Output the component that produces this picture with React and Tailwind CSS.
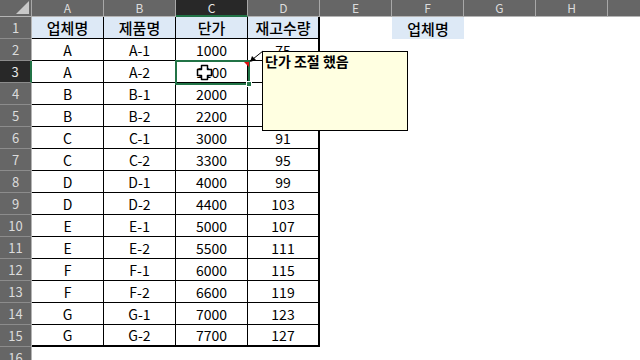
import React from 'react'

const cols = ['A', 'B', 'C', 'D', 'E', 'F', 'G', 'H', '']

const rows = [
  ['A', 'A-1', '1000', '75'],
  ['A', 'A-2', '1100', '79'],
  ['B', 'B-1', '2000', '83'],
  ['B', 'B-2', '2200', '87'],
  ['C', 'C-1', '3000', '91'],
  ['C', 'C-2', '3300', '95'],
  ['D', 'D-1', '4000', '99'],
  ['D', 'D-2', '4400', '103'],
  ['E', 'E-1', '5000', '107'],
  ['E', 'E-2', '5500', '111'],
  ['F', 'F-1', '6000', '115'],
  ['F', 'F-2', '6600', '119'],
  ['G', 'G-1', '7000', '123'],
  ['G', 'G-2', '7700', '127'],
]

const font = "font-['Noto_Sans_CJK_KR','Noto_Sans',sans-serif]"

function ColHeader({ name }) {
  const active = name === 'C'
  return (
    <div
      className={
        'h-[17px] border-r border-b border-r-[#a8a8a8] flex items-center justify-center text-[12px] leading-none ' +
        (active ? 'bg-[#282828] text-[#e6e6e6] border-b-2 border-b-[#217346]' : 'bg-[#666666] text-[#dcdcdc] border-b-[#b4b4b4]')
      }
    >
      {name}
    </div>
  )
}

function RowHeader({ n }) {
  const active = n === 3
  return (
    <div
      className={
        'h-[22px] border-b border-b-[#8c8c8c] flex items-center justify-center text-[13px] leading-none ' +
        (active ? 'bg-[#282828] text-[#e6e6e6] border-r-2 border-r-[#217346]' : 'bg-[#666666] text-[#dcdcdc] border-r border-r-[#b4b4b4]')
      }
    >
      {n}
    </div>
  )
}

function Cell({ children, head, right, bottom }) {
  return (
    <div
      className={
        'h-[22px] flex items-center justify-center leading-none text-black border-black ' +
        (right ? 'border-r-2 ' : 'border-r ') +
        (bottom ? 'border-b-2 ' : 'border-b ') +
        (head ? 'bg-[#dde9f6] text-[15px] font-medium' : 'bg-white text-[14px]')
      }
    >
      {children}
    </div>
  )
}

function Blank({ children, blue }) {
  return (
    <div
      className={
        'h-[22px] flex items-center justify-center text-[15px] font-medium leading-none ' +
        (blue ? 'bg-[#dde9f6]' : 'bg-white')
      }
    >
      {children}
    </div>
  )
}

export default function App() {
  return (
    <div className={'relative w-[640px] h-[360px] overflow-hidden bg-white ' + font}>
      <div className="grid grid-cols-[32px_repeat(9,72px)]">
        {/* corner */}
        <div className="h-[17px] bg-[#666666] border-r border-b border-r-[#a8a8a8] border-b-[#b4b4b4] flex items-end justify-end p-[2px]">
          <svg width="13" height="13" viewBox="0 0 13 13">
            <polygon points="13,0 13,13 0,13" fill="#c8c8c8" />
          </svg>
        </div>
        {cols.map((c, i) => (
          <ColHeader key={i} name={c} />
        ))}

        {/* row 1 */}
        <RowHeader n={1} />
        <Cell head>업체명</Cell>
        <Cell head>제품명</Cell>
        <Cell head>단가</Cell>
        <Cell head right>재고수량</Cell>
        <Blank />
        <Blank blue>업체명</Blank>
        <Blank />
        <Blank />
        <Blank />

        {rows.map((r, i) => {
          const last = i === rows.length - 1
          return (
            <React.Fragment key={i}>
              <RowHeader n={i + 2} />
              {r.map((v, j) => (
                <Cell key={j} right={j === 3} bottom={last}>
                  {v}
                </Cell>
              ))}
              <Blank />
              <Blank />
              <Blank />
              <Blank />
              <Blank />
            </React.Fragment>
          )
        })}

        <RowHeader n={16} />
      </div>

      {/* active cell C3 */}
      <div className="absolute left-[175px] top-[60px] w-[75px] h-[25px] border-2 border-[#217346]" />
      <div className="absolute left-[246px] top-[81px] w-[6px] h-[6px] bg-[#217346] border border-white" />
      <svg className="absolute left-[244px] top-[62px]" width="5" height="5" viewBox="0 0 5 5">
        <polygon points="0,0 5,0 5,5" fill="#e01010" />
      </svg>

      {/* comment pointer */}
      <svg className="absolute left-[246px] top-[48px]" width="20" height="18" viewBox="0 0 20 18">
        <line x1="17" y1="3" x2="7" y2="11" stroke="#000" strokeWidth="1" />
        <polygon points="4,14 6,8 10,12" fill="#000" />
      </svg>

      {/* comment */}
      <div className="absolute left-[262px] top-[51px] w-[146px] h-[80px] bg-[#ffffe1] border border-black px-[2px] pt-[2px]">
        <div className="text-[14px] font-bold leading-[15px] text-black">단가 조절 했음</div>
      </div>

      {/* fat cross pointer */}
      <svg className="absolute left-[196px] top-[64px]" width="17" height="17" viewBox="0 0 17 17">
        <polygon
          points="5.5,1.5 11.5,1.5 11.5,5.5 15.5,5.5 15.5,11.5 11.5,11.5 11.5,15.5 5.5,15.5 5.5,11.5 1.5,11.5 1.5,5.5 5.5,5.5"
          fill="#fff"
          stroke="#000"
          strokeWidth="1.5"
          strokeLinejoin="round"
        />
      </svg>
    </div>
  )
}
